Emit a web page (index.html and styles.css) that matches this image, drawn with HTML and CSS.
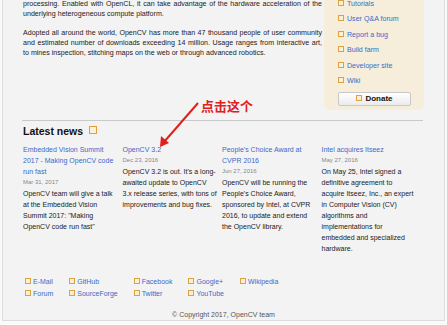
FILE: index.html
```html
<!DOCTYPE html>
<html lang="en">

<head>
  <meta charset="UTF-8">
  <meta name="viewport" content="width=device-width, initial-scale=1.0">
  <title>OpenCV</title>
  <link rel="stylesheet" href="styles.css">
</head>

<body>
  <div class="page">
    <div class="intro">
      <div class="intro-text">
        <p>processing. Enabled with OpenCL, it can take advantage of the hardware acceleration of the underlying heterogeneous compute platform.</p>
        <p>Adopted all around the world, OpenCV has more than 47 thousand people of user community and estimated number of downloads exceeding 14 million. Usage ranges from interactive art, to mines inspection, stitching maps on the web or through advanced robotics.</p>
      </div>
      <div class="sidebar">
        <ul class="side-links">
          <li><span class="box"></span><a href="#">Tutorials</a></li>
          <li><span class="box"></span><a href="#">User Q&amp;A forum</a></li>
          <li><span class="box"></span><a href="#">Report a bug</a></li>
          <li><span class="box"></span><a href="#">Build farm</a></li>
          <li><span class="box"></span><a href="#">Developer site</a></li>
          <li><span class="box"></span><a href="#">Wiki</a></li>
        </ul>
        <div class="donate"><span class="box"></span>Donate</div>
      </div>
    </div>

    <div class="news">
      <h2>Latest news <span class="box box-big"></span></h2>
      <div class="news-grid">
        <div class="news-item">
          <a href="#">Embedded Vision Summit 2017 - Making OpenCV code run fast</a>
          <div class="date">Mar 31, 2017</div>
          <p>OpenCV team will give a talk at the Embedded Vision Summit 2017: "Making OpenCV code run fast"</p>
        </div>
        <div class="news-item">
          <a href="#">OpenCV 3.2</a>
          <div class="date">Dec 23, 2016</div>
          <p>OpenCV 3.2 is out. It's a long-awaited update to OpenCV 3.x release series, with tons of improvements and bug fixes.</p>
        </div>
        <div class="news-item">
          <a href="#">People's Choice Award at CVPR 2016</a>
          <div class="date">Jun 27, 2016</div>
          <p>OpenCV will be running the People's Choice Award, sponsored by Intel, at CVPR 2016, to update and extend the OpenCV library.</p>
        </div>
        <div class="news-item">
          <a href="#">Intel acquires Itseez</a>
          <div class="date">May 27, 2016</div>
          <p>On May 25, Intel signed a definitive agreement to acquire Itseez, Inc., an expert in Computer Vision (CV) algorithms and implementations for embedded and specialized hardware.</p>
        </div>
      </div>
    </div>

    <div class="footer">
      <div class="footer-links">
        <ul class="col">
          <li><span class="box"></span><a href="#">E-Mail</a></li>
          <li><span class="box"></span><a href="#">Forum</a></li>
        </ul>
        <ul class="col">
          <li><span class="box"></span><a href="#">GitHub</a></li>
          <li><span class="box"></span><a href="#">SourceForge</a></li>
        </ul>
        <ul class="col">
          <li><span class="box"></span><a href="#">Facebook</a></li>
          <li><span class="box"></span><a href="#">Twitter</a></li>
        </ul>
        <ul class="col">
          <li><span class="box"></span><a href="#">Google+</a></li>
          <li><span class="box"></span><a href="#">YouTube</a></li>
        </ul>
        <ul class="col">
          <li><span class="box"></span><a href="#">Wikipedia</a></li>
        </ul>
      </div>
      <div class="copyright">&copy; Copyright 2017, OpenCV team</div>
    </div>

    <!-- annotation drawn over the page -->
    <div class="note">点击这个</div>
    <svg class="arrow" width="60" height="60" viewBox="0 0 60 60">
      <line x1="48" y1="2" x2="14" y2="41" stroke="#e0211b" stroke-width="2" />
      <polygon points="10,46 11,35 19,42" fill="#e0211b" />
    </svg>
  </div>
</body>

</html>
```

FILE: styles.css
```css
body {
  font-family: "Liberation Sans", Arial, sans-serif;
  background-color: #fafafa;
  margin: 0;
  padding: 0;
  color: #222;
}

a {
  color: #3b69c9;
  text-decoration: none;
}

ul {
  list-style: none;
  margin: 0;
  padding: 0;
}

.page {
  position: relative;
  margin: 0 2px;
  height: 321px;
  box-sizing: border-box;
  background-color: #f3f3f3;
  border: 1px solid #dcdcdc;
  border-top: none;
  overflow: hidden;
}

.box {
  display: inline-block;
  width: 4px;
  height: 4px;
  border: 1px solid #e0a040;
  background-color: #fbf1d8;
  margin-right: 3px;
  vertical-align: 0;
}

.box-big {
  width: 6px;
  height: 6px;
  margin-left: 3px;
  vertical-align: 1px;
}

/* intro + sidebar */
.intro {
  display: flex;
  padding-left: 20px;
}

.intro-text {
  width: 299px;
  font-size: 7.1px;
  line-height: 10px;
  text-align: justify;
  margin-top: -1px;
}

.intro-text p {
  margin: 0 0 9px;
}

.sidebar {
  width: 100px;
  margin-left: 2px;
  height: 110px;
  box-sizing: border-box;
  background-color: #f6eedb;
  border-radius: 0 0 6px 6px;
  padding: 0 13px 0 14px;
  font-size: 7.1px;
}

.side-links li {
  height: 15.4px;
  line-height: 9px;
}

.donate {
  height: 12px;
  line-height: 12px;
  text-align: center;
  font-weight: bold;
  font-size: 8px;
  color: #111;
  background: linear-gradient(#ffffff, #ebebeb);
  border: 1px solid #c8c8c8;
  border-radius: 2px;
}

/* latest news */
.news {
  margin: 10px 21px 0 19px;
  border-top: 1px solid #c9c9c9;
}

.news h2 {
  font-size: 10.5px;
  margin: 3px 0 6px 1px;
  line-height: 14px;
  color: #111;
}

.news-grid {
  display: grid;
  grid-template-columns: repeat(4, 95px);
  column-gap: 4.5px;
  padding-left: 1px;
  font-size: 7px;
  line-height: 11px;
}

.news-item .date {
  color: #888;
  font-size: 6px;
}

.news-item p {
  margin: 0;
}

/* footer */
.footer {
  position: absolute;
  left: 0;
  right: 0;
  top: 276px;
  font-size: 7px;
}

.footer-links {
  display: flex;
  padding-left: 22px;
}

.footer-links .col {
  margin-right: 16px;
}

.footer-links .box {
  margin-right: 2px;
}

.footer-links li {
  line-height: 12px;
}

.copyright {
  text-align: center;
  color: #555;
  font-size: 7px;
  margin-top: 11px;
}

/* annotation */
.note {
  position: absolute;
  left: 198px;
  top: 96px;
  font-family: "Noto Sans CJK SC", sans-serif;
  font-size: 13px;
  font-weight: bold;
  color: #e0211b;
}

.arrow {
  position: absolute;
  left: 147px;
  top: 101px;
}
```
